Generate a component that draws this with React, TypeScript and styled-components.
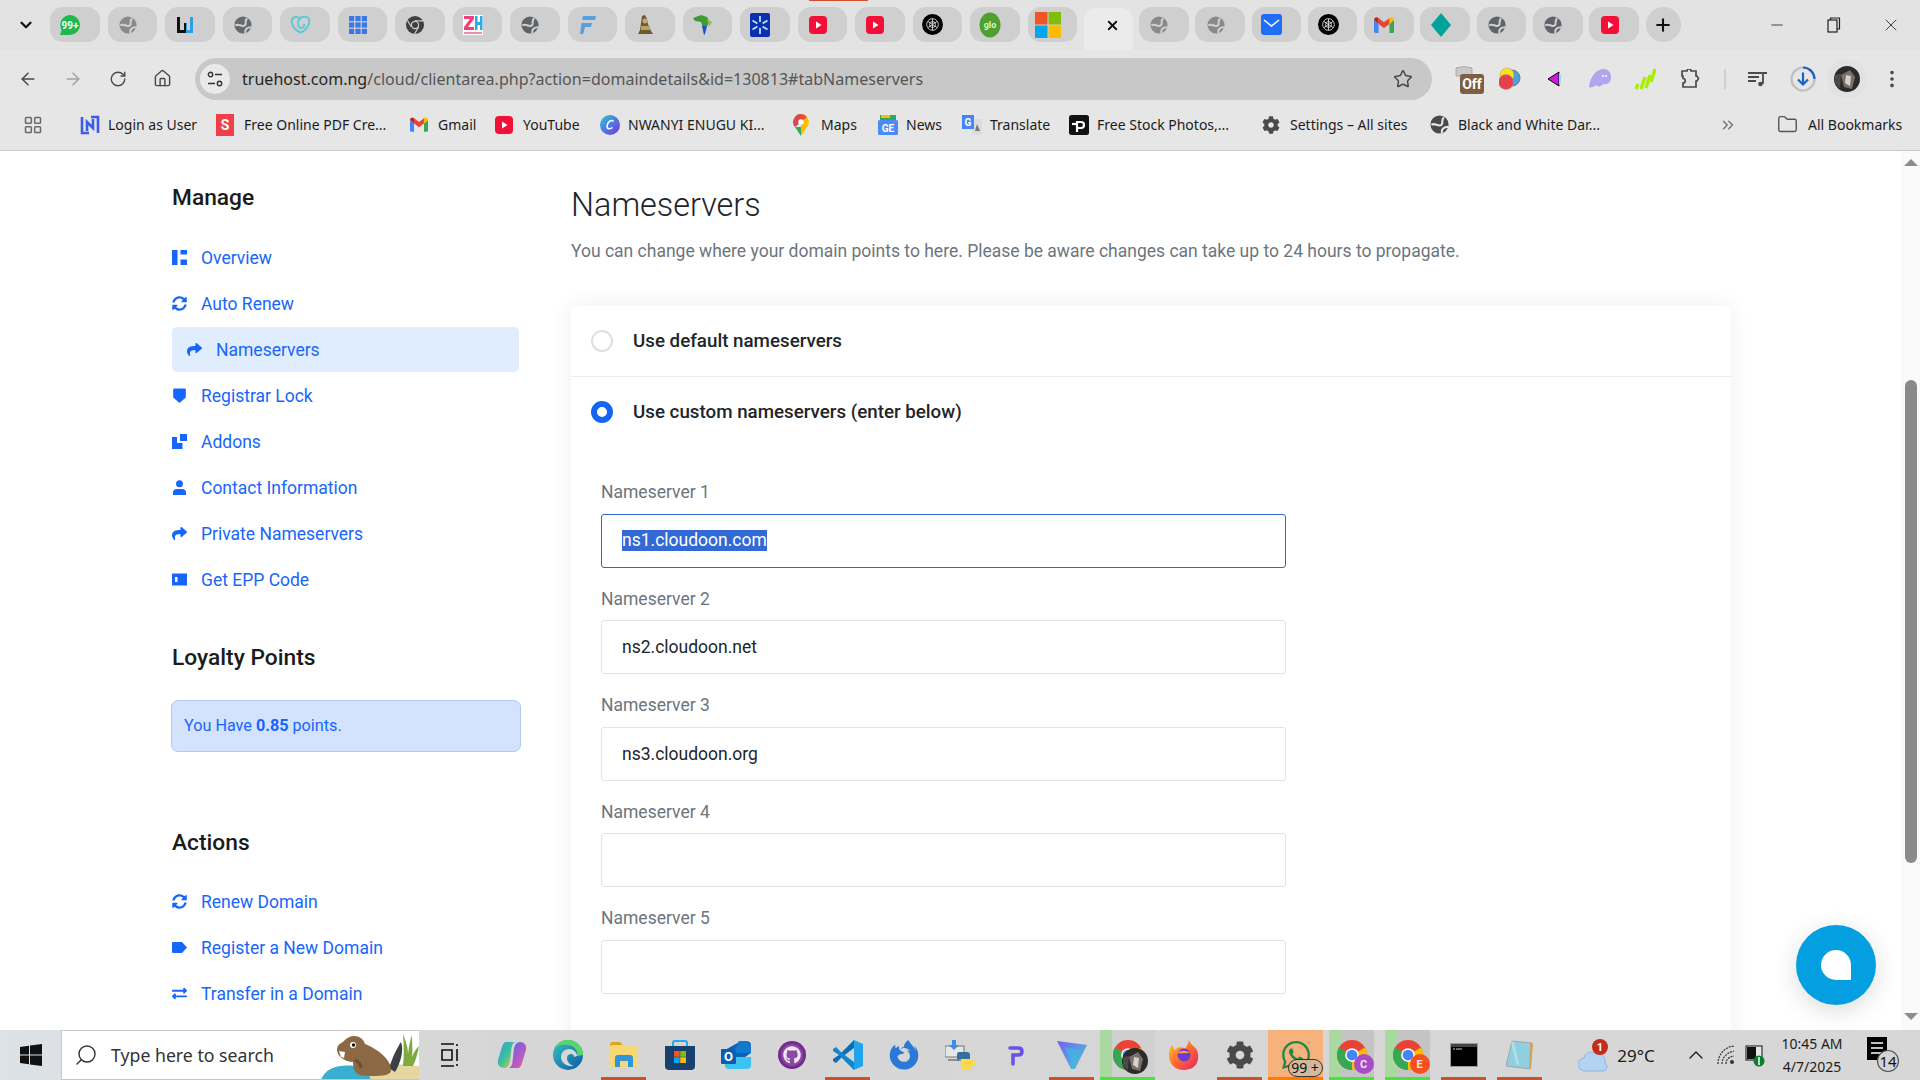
import React from "react";
import styled, { createGlobalStyle } from "styled-components";
import {
  ArrowLeft, ArrowRight, RotateCw, House, Star, EllipsisVertical, LayoutGrid, Folder,
  ChevronsRight, ChevronDown, ChevronUp, Minus, Plus, X, Search,
} from "lucide-react";
import { FaSyncAlt, FaShare, FaExchangeAlt, FaCog, FaWhatsapp, FaGithub, FaFirefoxBrowser } from "react-icons/fa";

const Global = createGlobalStyle`
  html, body { margin: 0; padding: 0; height: 100%; overflow: hidden; background: #fff; }
  #root { height: 100%; }
  * { box-sizing: border-box; }
`;

const UI = `"Noto Sans", "Open Sans", sans-serif`;
const WEB = `Roboto, "Liberation Sans", sans-serif`;
const LINK = "#1766fb";

/* ---------- frame ---------- */
const Screen = styled.div`
  position: relative;
  width: 1920px;
  height: 1080px;
  display: flex;
  flex-direction: column;
  overflow: hidden;
  font-family: ${WEB};
`;

/* ---------- tab strip ---------- */
const TabStrip = styled.div`
  position: relative;
  height: 50px;
  flex: none;
  background: #e3e3e3;
  display: flex;
  padding-left: 12px;
`;
const RecordingMark = styled.div`
  position: absolute;
  left: 809px;
  top: 0;
  width: 59px;
  height: 1px;
  background: #d14f2b;
`;
const TabMenu = styled.div`
  width: 27px;
  height: 35px;
  margin: 7px 11px 0 0;
  display: flex;
  align-items: center;
  justify-content: center;
  color: #111;
`;
const TabGroup = styled.div<{ $gap: number }>`
  display: flex;
  gap: ${(p) => p.$gap}px;
`;
const Tab = styled.div`
  width: 49.5px;
  height: 35px;
  margin-top: 7px;
  border-radius: 13px;
  background: #cfcfcf;
  display: flex;
  align-items: center;
  justify-content: center;
  padding-right: 9px;
`;
const ActiveTab = styled.div`
  width: 49px;
  height: 42px;
  margin: 8px 6px 0 7px;
  border-radius: 12px 12px 0 0;
  background: #ebebeb;
  display: flex;
  align-items: center;
  justify-content: center;
  padding: 0 0 7px 7px;
  color: #111;
`;
const NewTab = styled.div`
  width: 35px;
  height: 35px;
  margin: 7px 0 0 7px;
  border-radius: 50%;
  background: #cfcfcf;
  display: flex;
  align-items: center;
  justify-content: center;
  color: #111;
`;
const WindowControls = styled.div`
  margin-left: auto;
  display: flex;
  color: #333;
`;
const WindowButton = styled.div<{ $w: number }>`
  width: ${(p) => p.$w}px;
  height: 50px;
  display: flex;
  align-items: center;
  justify-content: center;
`;

/* ---------- toolbar ---------- */
const Toolbar = styled.div`
  height: 57px;
  flex: none;
  background: #e6e6e6;
  display: flex;
  align-items: center;
  padding-left: 5px;
`;
const NavButton = styled.div<{ $dim?: boolean }>`
  width: 45px;
  height: 36px;
  display: flex;
  align-items: center;
  justify-content: center;
  color: ${(p) => (p.$dim ? "#a2a2a2" : "#4a4a4a")};
`;
const Omnibox = styled.div`
  width: 1236.5px;
  height: 42px;
  margin: 1px 17.5px 0 10px;
  border-radius: 21px;
  background: #c8c8c8;
  display: flex;
  align-items: center;
  padding: 0 19px 0 5px;
`;
const SiteInfo = styled.div`
  width: 30px;
  height: 30px;
  border-radius: 50%;
  background: #e9e9e9;
  display: flex;
  align-items: center;
  justify-content: center;
  margin-right: 12px;
  flex: none;
`;
const Url = styled.div`
  flex: 1;
  font-family: ${UI};
  font-size: 16px;
  color: #555;
  white-space: nowrap;
  letter-spacing: 0.02px;
`;
const Domain = styled.span`
  color: #242424;
`;
const StarButton = styled.div`
  color: #4a4a4a;
  display: flex;
`;
const Slot = styled.div<{ $w: number }>`
  width: ${(p) => p.$w}px;
  height: 42px;
  flex: none;
  display: flex;
  align-items: center;
  justify-content: center;
  color: #4a4a4a;
`;
const Divider = styled.div`
  width: 2px;
  height: 20px;
  background: #cfcfcf;
`;
const AvatarHalo = styled.div`
  width: 40px;
  height: 40px;
  border-radius: 50%;
  background: #e2e2e2;
  display: flex;
  align-items: center;
  justify-content: center;
`;

/* ---------- bookmarks ---------- */
const Bookmarks = styled.div`
  height: 44px;
  flex: none;
  background: #e6e6e6;
  border-bottom: 1px solid #c9c9c9;
  display: flex;
  align-items: center;
  padding: 0 0 8px 23px;
  font-family: ${UI};
  font-size: 14px;
  color: #1c1c1c;
`;
const AppsIcon = styled.div`
  width: 20px;
  display: flex;
  color: #6a6a6a;
`;
const BarDivider = styled.div<{ $after: number; $before: number }>`
  width: 2px;
  height: 20px;
  background: #d0d0d0;
  margin: 0 ${(p) => p.$after}px 0 ${(p) => p.$before}px;
`;
const Bookmark = styled.div<{ $w: number }>`
  width: ${(p) => p.$w}px;
  flex: none;
  display: flex;
  align-items: center;
  white-space: nowrap;
`;
const BookmarkIcon = styled.span<{ $w?: number }>`
  width: ${(p) => p.$w ?? 28}px;
  flex: none;
  display: flex;
`;
const OverflowIcon = styled.div`
  margin-left: 110px;
  width: 20px;
  color: #777;
  display: flex;
`;

/* ---------- page ---------- */
const Viewport = styled.div`
  flex: 1;
  min-height: 0;
  background: #fff;
  display: flex;
  overflow: hidden;
`;
const Content = styled.div`
  flex: 1;
  display: flex;
  padding-left: 172px;
`;
const Sidebar = styled.aside`
  width: 349px;
  flex: none;
  margin-right: 50px;
  padding-top: 34px;
`;
const SideHeading = styled.h3<{ $top?: number; $bottom: number }>`
  margin: ${(p) => p.$top ?? 0}px 0 ${(p) => p.$bottom}px;
  font-size: 22.75px;
  line-height: 26px;
  font-weight: 500;
  color: #1b1b1b;
`;
const NavItem = styled.div<{ $active?: boolean }>`
  height: 45px;
  margin-bottom: 1px;
  display: flex;
  align-items: center;
  gap: 14px;
  color: ${LINK};
  font-size: 17.5px;
  padding-left: ${(p) => (p.$active ? 15 : 0)}px;
  width: 347px;
  border-radius: 5px;
  background: ${(p) => (p.$active ? "#e0edfe" : "transparent")};
`;
const NavGlyph = styled.span`
  width: 15px;
  height: 15px;
  flex: none;
  display: flex;
`;
const PointsBox = styled.div`
  width: 350px;
  height: 52px;
  margin-left: -1px;
  border: 1px solid #b0c9fb;
  border-radius: 7px;
  background: #d4e2fd;
  color: ${LINK};
  font-size: 16.2px;
  display: flex;
  align-items: center;
  padding: 0 0 1px 12px;
  white-space: pre;
`;
const Main = styled.main`
  width: 1160px;
  flex: none;
  padding-top: 35px;
`;
const Title = styled.h2`
  margin: 0 0 15px;
  font-size: 32.4px;
  line-height: 38px;
  font-weight: 300;
  color: #212529;
`;
const Lead = styled.p`
  margin: 0 0 43px;
  font-size: 17.5px;
  line-height: 24px;
  color: #6c757d;
`;
const Card = styled.section`
  border-radius: 6px;
  background: #fff;
  box-shadow: 0 0 22px rgba(0, 0, 0, 0.07);
  height: 800px;
`;
const OptionRow = styled.div<{ $line?: boolean }>`
  height: ${(p) => (p.$line ? 71 : 70)}px;
  border-bottom: ${(p) => (p.$line ? "1px solid #ebebeb" : "none")};
  display: flex;
  align-items: center;
  padding-left: 20px;
  gap: 20px;
  font-size: 18.75px;
  font-weight: 500;
  color: #212529;
`;
const OptionText = styled.span`
  padding-bottom: 1px;
`;
const Radio = styled.span<{ $on?: boolean }>`
  width: 22px;
  height: 22px;
  flex: none;
  border-radius: 50%;
  background: #fff;
  border: ${(p) => (p.$on ? "6px solid #1266f1" : "2px solid #dfdfe3")};
`;
const Fields = styled.div`
  padding: 34px 0 0 30px;
`;
const Field = styled.div`
  margin-bottom: 20px;
  width: 685px;
`;
const FieldLabel = styled.div`
  height: 22px;
  line-height: 22px;
  margin-bottom: 10.5px;
  font-size: 17.5px;
  color: #6c757d;
`;
const FieldBox = styled.div<{ $focus?: boolean }>`
  height: 54px;
  border: 1px solid ${(p) => (p.$focus ? "#2d66d8" : "#e1e3e6")};
  border-radius: 3px;
  display: flex;
  align-items: center;
  padding-left: 20px;
  font-size: 17.5px;
  color: #212529;
`;
const Selected = styled.span`
  background: #3269d6;
  color: #fff;
  line-height: 21px;
`;

/* ---------- scrollbar & chat ---------- */
const Scrollbar = styled.div`
  width: 19px;
  flex: none;
  background: #fafafa;
  display: flex;
  flex-direction: column;
  align-items: center;
  padding-top: 8px;
`;
const ArrowUp = styled.div`
  width: 0;
  height: 0;
  border-left: 7px solid transparent;
  border-right: 7px solid transparent;
  border-bottom: 7px solid #8c8c8c;
`;
const ArrowDown = styled.div`
  width: 0;
  height: 0;
  border-left: 7px solid transparent;
  border-right: 7px solid transparent;
  border-top: 7px solid #8c8c8c;
`;
const Thumb = styled.div`
  width: 12px;
  height: 483px;
  margin: 214px 0 150px;
  border-radius: 6px;
  background: #8a8a8a;
`;
const ChatButton = styled.div`
  position: absolute;
  left: 1796px;
  top: 925px;
  width: 80px;
  height: 80px;
  border-radius: 50%;
  background: #039fe0;
  box-shadow: 0 6px 24px rgba(0, 0, 0, 0.14);
  display: flex;
  align-items: center;
  justify-content: center;
`;
const ChatGlyph = styled.div`
  width: 30px;
  height: 30px;
  background: #fff;
  border-radius: 15px 15px 0 15px;
`;

/* ---------- taskbar ---------- */
const Taskbar = styled.footer`
  height: 50px;
  flex: none;
  display: flex;
  background: linear-gradient(90deg, #dde2e6 0, #d6d6d6 500px, #d7d7d7 100%);
`;
const StartButton = styled.div`
  width: 61px;
  display: flex;
  align-items: center;
  justify-content: center;
`;
const SearchBox = styled.div`
  position: relative;
  width: 358px;
  background: #fff;
  border: 1px solid #c6c6c6;
  border-right: none;
  display: flex;
  align-items: center;
  padding-left: 12px;
  gap: 13px;
  font-family: ${UI};
  font-size: 17.7px;
  color: #333;
  overflow: hidden;
`;
const SearchGlyph = styled.span`
  display: flex;
  transform: scaleX(-1);
`;
const BeaverArt = styled.div`
  margin-left: auto;
  width: 98px;
  height: 50px;
  flex: none;
  display: flex;
`;
const TaskItem = styled.div<{ $w?: number; $mr?: number; $bar?: string; $bg?: string; $lit?: string }>`
  width: ${(p) => p.$w ?? 45}px;
  margin-right: ${(p) => p.$mr ?? 11}px;
  flex: none;
  display: flex;
  align-items: center;
  justify-content: center;
  background: ${(p) => (p.$lit ? `linear-gradient(90deg, ${p.$lit} 12px, ${p.$bg} 12px)` : p.$bg ?? "transparent")};
  border-bottom: 3px solid ${(p) => p.$bar ?? "transparent"};
  padding-top: 3px;
`;
const TaskViewSlot = styled.div`
  width: 45px;
  margin: 0 16px 0 9px;
  flex: none;
  display: flex;
  align-items: center;
  justify-content: center;
`;
const Tray = styled.div`
  display: flex;
  align-items: center;
  font-family: ${UI};
  color: #1c1c1c;
`;
const TrayIcon = styled.div<{ $w: number; $ml?: number }>`
  width: ${(p) => p.$w}px;
  margin-left: ${(p) => p.$ml ?? 0}px;
  display: flex;
  justify-content: center;
  font-size: 17px;
  white-space: nowrap;
`;
const Clock = styled.div`
  width: 66px;
  margin-left: 12px;
  text-align: center;
  font-size: 14px;
  line-height: 23px;
`;

/* ---------- favicon drawings ---------- */
const Globe = ({ c = "#5f6368", s = 18, h = "#cfcfcf" }: { c?: string; s?: number; h?: string }) => (
  <svg width={s} height={s} viewBox="0 0 20 20" fill="none">
    <circle cx="10" cy="10" r="9.500" fill={c} />
    <path d="M1.500 10.500C5 7.500 8.500 13 12 10.500 14.500 8.500 11 6.500 14.500 2.500M12.500 19c-.8-4 2-6.500 6.500-6.500" stroke={h} strokeWidth="2.300" />
  </svg>
);
const WhatsBadge = () => (
  <svg width="22" height="22" viewBox="0 0 22 22">
    <path d="M11 1a10 10 0 0 1 0 20H1l1.600-5A10 10 0 0 1 11 1z" fill="#1fb84e" />
    <text x="11" y="14.500" fontSize="10" fontWeight="700" textAnchor="middle" fill="#fff" fontFamily="Roboto, sans-serif">99+</text>
  </svg>
);
const WLogo = () => (
  <svg width="18" height="18" viewBox="0 0 18 18">
    <path d="M1 1h3v13h4V7h2v10H1z" fill="#111" />
    <path d="M10 7h1v7h3V1h3v16h-7z" fill="#2d9fe3" />
  </svg>
);
const TealMark = () => (
  <svg width="21" height="19" viewBox="0 0 21 19" fill="none" stroke="#5dcad3" strokeWidth="2">
    <path d="M10.500 17.500C4 15 1 9.500 2 5c.8-3.500 5-4 7.500-1.500C12 1 17.500 .7 19 4.500c1.300 4-2.500 11-8.500 13z" />
    <path d="M9.500 3.500C7.500 7 7.500 11 10 13c3 .5 4.500-1.500 4-4" />
  </svg>
);
const BlueGrid = () => (
  <svg width="18" height="18" viewBox="0 0 18 18" fill="#3b78e7">
    {[0, 6.4, 12.8].flatMap((y) => [0, 6.4, 12.8].map((x) => <rect key={`${x}-${y}`} x={x} y={y} width="5.200" height="5.200" />))}
  </svg>
);
const ChromeMono = () => (
  <svg width="18" height="18" viewBox="0 0 18 18">
    <circle cx="9" cy="9" r="9" fill="#3f3f3f" />
    <circle cx="9" cy="9" r="4.200" fill="#cfcfcf" />
    <circle cx="9" cy="9" r="3" fill="#3f3f3f" />
    <path d="M9 4.800h8M5.400 11 1.500 4.500M12.600 11 8.500 18" stroke="#cfcfcf" strokeWidth="1.200" />
  </svg>
);
const ZkLogo = () => (
  <svg width="20" height="20" viewBox="0 0 20 20">
    <rect width="20" height="20" fill="#fff" />
    <path d="M1 1h10v3L5 12h6v3H1v-3l6-8H1z" fill="#f0417e" />
    <path d="M12 1h2.500v6H17V1h2.500v14H17V10h-2.500v5H12z" fill="#2fa9e0" />
    <rect x="1" y="17" width="18" height="2" fill="#e98bb0" />
  </svg>
);
const FLogo = () => (
  <svg width="16" height="18" viewBox="0 0 16 18">
    <path d="M3 0h13l-1 4H2zM1.500 7H12l-1 4H5l-1.800 7H0z" fill="#54a0e2" />
  </svg>
);
const Figure = () => (
  <svg width="18" height="20" viewBox="0 0 18 20">
    <path d="M6 1l3-1 2 4 1 5 3 7 2 3H2l2-4z" fill="#6d5a2f" />
    <rect x="5" y="11" width="9" height="4" fill="#b9a25b" />
    <circle cx="9" cy="6" r="2.500" fill="#c8a877" />
  </svg>
);
const MapLogo = () => (
  <svg width="20" height="20" viewBox="0 0 20 20">
    <path d="M0 3l8-3 6 2 3 5-3 4-2 3-2-1-2-6-6-1z" fill="#3f9b34" />
    <path d="M9 11l5 0-2 8-1 1z" fill="#1d4fd0" />
    <path d="M14 4l5 3-3 5z" fill="#8bc34a" />
  </svg>
);
const StarLogo = () => (
  <svg width="20" height="24" viewBox="0 0 20 24">
    <rect width="20" height="24" rx="2" fill="#0b2fb0" />
    <path d="M10 3v18M2.500 7.500l15 9M17.500 7.500l-15 9" stroke="#bfe9ff" strokeWidth="1.700" />
    <circle cx="10" cy="12" r="3" fill="#0b2fb0" />
  </svg>
);
const YtLogo = ({ s = 18 }: { s?: number }) => (
  <svg width={s} height={s} viewBox="0 0 18 18">
    <rect width="18" height="18" rx="4" fill="#f40f36" />
    <path d="M7 5.500l5.500 3.500L7 12.500z" fill="#fff" />
  </svg>
);
const OpenAi = ({ s = 21 }: { s?: number }) => (
  <svg width={s} height={s} viewBox="0 0 21 21" fill="none">
    <circle cx="10.500" cy="10.500" r="10.500" fill="#000" />
    <g stroke="#ddd" strokeWidth=".9">
      <circle cx="10.500" cy="10.500" r="5.800" />
      <path d="M6 7.500l9 6M15 7.500l-9 6M10.500 4.700v11.600" />
      <circle cx="10.500" cy="10.500" r="3" />
    </g>
  </svg>
);
const GloLogo = () => (
  <svg width="22" height="26" viewBox="0 0 22 26">
    <ellipse cx="11" cy="13" rx="10.500" ry="12.500" fill="#4fa02e" />
    <text x="11" y="16" fontSize="9" fontWeight="700" textAnchor="middle" fill="#dff0c8" fontFamily="Roboto, sans-serif">glo</text>
  </svg>
);
const MsLogo = ({ s = 26 }: { s?: number }) => (
  <svg width={s} height={s} viewBox="0 0 26 26">
    <rect width="12.500" height="12.500" fill="#f35325" />
    <rect x="13.500" width="12.500" height="12.500" fill="#81bc06" />
    <rect y="13.500" width="12.500" height="12.500" fill="#05a6f0" />
    <rect x="13.500" y="13.500" width="12.500" height="12.500" fill="#ffba08" />
  </svg>
);
const MailLogo = () => (
  <svg width="21" height="21" viewBox="0 0 21 21">
    <rect width="21" height="21" rx="3" fill="#1f6ef5" />
    <path d="M3 6l7.500 6L18 6" stroke="#fff" strokeWidth="1.500" fill="none" />
  </svg>
);
const GmailLogo = ({ w = 20, h = 16 }: { w?: number; h?: number }) => (
  <svg width={w} height={h} viewBox="0 0 20 16">
    <path d="M0 3v11.500c0 .8.700 1.500 1.500 1.500H4.500V7z" fill="#4285f4" />
    <path d="M15.500 7v9h3c.8 0 1.500-.7 1.500-1.500V3z" fill="#34a853" />
    <path d="M4.500 7V1L10 5.200 15.500 1v6L10 11z" fill="#ea4335" />
    <path d="M0 3c0-2.500 2.800-3.800 4.500-2v6z" fill="#c5221f" />
    <path d="M20 3c0-2.500-2.800-3.800-4.500-2v6z" fill="#fbbc04" />
  </svg>
);
const Diamond = () => (
  <svg width="20" height="24" viewBox="0 0 20 24">
    <path d="M10 0l10 12-10 12L0 12z" fill="#00a49a" />
  </svg>
);

/* ---------- bookmark favicons ---------- */
const LoginIcon = () => (
  <svg width="20" height="20" viewBox="0 0 20 20" fill="none" stroke="#3b5de7" strokeWidth="2.600">
    <path d="M2 2v16h7M18 18V2h-7M7 16V7l6 6V4" />
  </svg>
);
const PdfIcon = () => (
  <svg width="18" height="22" viewBox="0 0 18 22">
    <rect width="18" height="22" fill="#ee3f4a" />
    <text x="9" y="16" fontSize="14" fontWeight="700" textAnchor="middle" fill="#fff" fontFamily="Roboto, sans-serif">S</text>
  </svg>
);
const CanvaIcon = () => (
  <svg width="20" height="20" viewBox="0 0 20 20">
    <defs>
      <linearGradient id="cv" x1="0" y1="0" x2="1" y2="1">
        <stop offset="0" stopColor="#25c9d6" />
        <stop offset="1" stopColor="#7a2ce8" />
      </linearGradient>
    </defs>
    <circle cx="10" cy="10" r="10" fill="url(#cv)" />
    <path d="M13.500 6.500C11.500 4 7 7 7 11.500c0 2.500 3 3 5.500 1" stroke="#fff" strokeWidth="1.600" fill="none" />
  </svg>
);
const MapsIcon = () => (
  <svg width="16" height="22" viewBox="0 0 16 22">
    <path d="M8 0a8 8 0 0 1 6 13L8 22z" fill="#fbbc04" />
    <path d="M8 0a8 8 0 0 0-6 13l6-5z" fill="#4285f4" />
    <path d="M8 0a8 8 0 0 1 6 3L2 13A8 8 0 0 1 8 0z" fill="#ea4335" opacity=".9" />
    <path d="M2 13l6 9v-9z" fill="#34a853" />
    <circle cx="8" cy="8" r="2.700" fill="#fff" />
  </svg>
);
const NewsIcon = () => (
  <svg width="20" height="20" viewBox="0 0 20 20">
    <rect x="2" y="0" width="16" height="6" fill="#34a853" />
    <rect x="3" y="0" width="9" height="3" fill="#fbbc04" />
    <rect y="5" width="20" height="15" rx="1.500" fill="#4c8bf5" />
    <text x="10" y="16.500" fontSize="10" fontWeight="700" textAnchor="middle" fill="#fff" fontFamily="Roboto, sans-serif">GE</text>
  </svg>
);
const TranslateIcon = () => (
  <svg width="20" height="20" viewBox="0 0 20 20">
    <path d="M8 4h12v16H10z" fill="#dadce0" />
    <rect width="12" height="14" fill="#4285f4" />
    <text x="6" y="11" fontSize="10" fontWeight="700" textAnchor="middle" fill="#fff" fontFamily="Roboto, sans-serif">G</text>
    <path d="M15 9l3 7h-5z" fill="#777" />
  </svg>
);
const PexelsIcon = () => (
  <svg width="20" height="20" viewBox="0 0 20 20">
    <rect width="20" height="20" rx="2.500" fill="#111" />
    <path d="M8 17V7h4a3 3 0 0 1 0 6H8" stroke="#fff" strokeWidth="2.200" fill="none" />
    <path d="M3 9h5" stroke="#fff" strokeWidth="2.200" />
  </svg>
);

/* ---------- extension icons ---------- */
const OffIcon = () => (
  <svg width="30" height="30" viewBox="0 0 30 30">
    <path d="M2 4q8-3 16 0v8H2z" fill="#c8c8c8" stroke="#aaa" strokeWidth="1" />
    <rect x="6" y="10" width="24" height="20" rx="3" fill="#7d5f3f" />
    <text x="18" y="25" fontSize="14" fontWeight="700" textAnchor="middle" fill="#fff" fontFamily="Roboto, sans-serif">Off</text>
  </svg>
);
const Colors = () => (
  <svg width="22" height="24" viewBox="0 0 22 24">
    <circle cx="13" cy="11" r="8" fill="#4aa3df" stroke="#777" />
    <circle cx="8" cy="8" r="7" fill="#f8e21a" stroke="#999" strokeWidth=".5" />
    <circle cx="7" cy="15" r="7.500" fill="#e8404a" stroke="#999" strokeWidth=".5" />
  </svg>
);
const Arrowhead = () => (
  <svg width="16" height="16" viewBox="0 0 16 16">
    <path d="M13 1v14L2 8z" fill="#d21adf" stroke="#000" strokeWidth="1" />
    <path d="M13 2l2 2v8l-2 2z" fill="#7fe8f0" />
  </svg>
);
const Ghost = () => (
  <svg width="22" height="20" viewBox="0 0 22 20">
    <path d="M0 18C1 8 7 0 15 0c4 0 7 3 7 8s-3 8-8 7c-2 3-5 3-7 1-2 2-5 3-7 2z" fill="#b0a6f0" />
    <circle cx="14" cy="7" r="1" fill="#fff" />
    <circle cx="17" cy="7" r="1" fill="#fff" />
  </svg>
);
const GreenBars = () => (
  <svg width="22" height="22" viewBox="0 0 22 22" fill="none" stroke="#a6f000" strokeWidth="3.400">
    <path d="M2 21l2-5M7 21l4-12M12 20l4-13M17 14l4-13" />
  </svg>
);
const PuzzleIcon = () => (
  <svg width="20" height="20" viewBox="0 0 20 20" fill="none" stroke="#4a4a4a" strokeWidth="1.700">
    <path d="M2 2h5a2 2 0 0 1 4 0h5v5h1l1.500 2.500L17 12h-1v6H3v-4a2.200 2.200 0 0 0 0-4.500V7H2z" />
  </svg>
);
const MediaIcon = () => (
  <svg width="20" height="16" viewBox="0 0 20 16" fill="none" stroke="#4a4a4a" strokeWidth="1.800">
    <path d="M0 2h14M0 6h11M0 10h8M15 13V2h4" />
    <circle cx="12.500" cy="13" r="2.300" fill="#4a4a4a" stroke="none" />
  </svg>
);
const DownloadRing = () => (
  <svg width="26" height="26" viewBox="0 0 26 26" fill="none">
    <circle cx="13" cy="13" r="11.500" stroke="#c0c0c0" strokeWidth="2.200" />
    <path d="M13 1.500A11.500 11.500 0 0 1 24.500 13" stroke="#1a62c8" strokeWidth="2.200" />
    <path d="M13 6.500V18M8 13.500l5 5 5-5" stroke="#1a62c8" strokeWidth="2.200" />
  </svg>
);
const Avatar = () => (
  <svg width="26" height="26" viewBox="0 0 26 26">
    <circle cx="13" cy="13" r="13" fill="#2b2b2b" />
    <path d="M7 9l9-5 5 7-3 12-8-2z" fill="#7b6f6c" />
    <path d="M12 9l5 1-1 10-5-3z" fill="#d8d0cf" />
    <path d="M1 9l6-1-1 15-5-6z" fill="#4a4a4a" />
  </svg>
);
const SiteTune = () => (
  <svg width="16" height="16" viewBox="0 0 16 16" fill="none" stroke="#333" strokeWidth="1.400">
    <circle cx="3.500" cy="3.500" r="2.200" />
    <circle cx="12.500" cy="12.500" r="2.200" />
    <path d="M8 3.500h7M1 12.500h7" />
  </svg>
);
const SmallGlobe = () => <Globe c="#4a4a4a" s={19} h="#e6e6e6" />;
const CogIcon = () => <FaCog size={18} color="#4a4a4a" />;

/* ---------- taskbar drawings ---------- */
const WinLogo = () => (
  <svg width="22" height="24" viewBox="0 0 22 24" fill="#111">
    <path d="M0 4l9-1.300V11.500H0zM10 2.500L22 1v10.500H10zM0 12.500h9v8.800L0 20zM10 12.500h12V23l-12-1.600z" />
  </svg>
);
const Beaver = () => (
  <svg width="98" height="50" viewBox="0 0 98 50">
    <path d="M22 40C40 34 70 32 98 36V50H40z" fill="#e6d6a0" />
    <path d="M0 50C4 38 18 34 34 36c10 2 14 8 16 14z" fill="#3aaed0" />
    <path d="M82 36c1-10 1-20 0-32 3 8 5 13 5 20 1-8 2-14 4-19 0 10 1 15 0 22 2-5 4-8 7-11-1 6-3 14-6 20z" fill="#7dab3e" />
    <path d="M68 38c4-12 8-20 12-26 3 8 0 20-6 30z" fill="#3d3f44" />
    <path d="M22 12C30 2 42 6 44 14c10 4 26 14 26 26 0 6-10 6-24 6-10 0-14-4-14-14-8 0-16-6-16-12 0-4 2-6 6-8z" fill="#8d6845" />
    <circle cx="32" cy="15" r="3" fill="#fff" />
    <circle cx="32.500" cy="15" r="1.700" fill="#111" />
    <path d="M18 21l6 1-1 6-3-1z" fill="#fff" />
    <path d="M34 30q5 2 6 8" stroke="#6d4f33" strokeWidth="3" fill="none" />
  </svg>
);
const TaskViewIcon = () => (
  <svg width="20" height="24" viewBox="0 0 20 24" fill="none" stroke="#111" strokeWidth="1.600">
    <path d="M0 1h13M0 23h13M1 7h10v10H1zM16 1v2M16 6v12M16 21v2" />
  </svg>
);
const CopilotIcon = () => (
  <svg width="30" height="30" viewBox="0 0 30 30">
    <defs>
      <linearGradient id="co1" x1="0" y1="0" x2="1" y2="1">
        <stop offset="0" stopColor="#2a9fe8" />
        <stop offset=".5" stopColor="#3ec09a" />
        <stop offset="1" stopColor="#f7c93c" />
      </linearGradient>
      <linearGradient id="co2" x1="0" y1="0" x2="1" y2="1">
        <stop offset="0" stopColor="#3d6fe0" />
        <stop offset=".5" stopColor="#a65ad0" />
        <stop offset="1" stopColor="#f25f8a" />
      </linearGradient>
    </defs>
    <path d="M9 2h9c-2 1-3 3-3.500 6L13 22c-1 4-3 6-6 6-4 0-7-3-6-8L5 7c1-3 2-5 4-5z" fill="url(#co1)" />
    <path d="M21 28h-9c2-1 3-3 3.500-6L17 8c1-4 3-6 6-6 4 0 7 3 6 8L25 23c-1 3-2 5-4 5z" fill="url(#co2)" />
  </svg>
);
const EdgeIcon = () => (
  <svg width="30" height="30" viewBox="0 0 30 30">
    <defs>
      <linearGradient id="ed" x1="0" y1="0" x2="1" y2="1">
        <stop offset="0" stopColor="#36c4c0" />
        <stop offset="1" stopColor="#0c59a4" />
      </linearGradient>
    </defs>
    <circle cx="15" cy="15" r="15" fill="url(#ed)" />
    <path d="M30 15c0-8-6-15-15-15C9 0 4 3 1 8c4-3 9-4 14-3 7 1 10 6 9 11z" fill="#58d66b" />
    <path d="M24 16c0-4-4-7-8-7-5 0-8 4-8 8 0 6 6 10 13 9-4-1-7-4-7-8 0-3 2-4 4-4s3 1 3 3z" fill="#d7d7d7" />
  </svg>
);
const ExplorerIcon = () => (
  <svg width="28" height="26" viewBox="0 0 28 26">
    <path d="M0 3c0-2 1-3 2-3h8l3 3v4H0z" fill="#e0a51e" />
    <rect y="3" width="28" height="22" rx="2" fill="#f8d775" />
    <path d="M5 25V16q0-3 3-3h12q3 0 3 3v9h-5v-6h-8v6z" fill="#2f94d8" />
  </svg>
);
const StoreIcon = () => (
  <svg width="30" height="30" viewBox="0 0 30 30">
    <path d="M8 6V3q0-2 2-2h10q2 0 2 2v3" stroke="#27a9f0" strokeWidth="2" fill="none" />
    <path d="M0 6h30v20q0 4-4 4H4q-4 0-4-4z" fill="#17406f" />
    <g transform="translate(9 11)"><MsLogo s={12} /></g>
  </svg>
);
const OutlookIcon = () => (
  <svg width="30" height="28" viewBox="0 0 30 28">
    <path d="M4 9L20 0h4q6 0 6 4v8L12 24z" fill="#0a62b8" />
    <path d="M4 16h26v8q0 4-4 4H8q-4 0-4-4z" fill="#3dc3ef" />
    <path d="M18 0h6L30 4v8H12z" fill="#1379cf" />
    <rect y="8" width="15" height="15" rx="1" fill="#0a5cb4" />
    <text x="7.500" y="20" fontSize="13" fontWeight="700" textAnchor="middle" fill="#fff" fontFamily="Roboto, sans-serif">O</text>
  </svg>
);
const GithubRound = () => (
  <svg width="28" height="28" viewBox="0 0 28 28">
    <circle cx="14" cy="14" r="14" fill="#762a8e" />
    <circle cx="14" cy="14" r="11" fill="#8a4aa0" />
    <g transform="translate(5 5)"><FaGithub size={18} color="#efe6f2" /></g>
  </svg>
);
const VsCodeIcon = () => (
  <svg width="30" height="30" viewBox="0 0 30 30">
    <path d="M21 0l9 4v22l-9 4z" fill="#23a3ea" />
    <path d="M21 0v8L9 17 3 23l-3-2v-2l6-4L21 0z" fill="#0a6fb5" />
    <path d="M21 30v-8L9 13 3 7 0 9v2l6 4 15 15z" fill="#0f86cf" />
  </svg>
);
const PythonTool = () => (
  <svg width="30" height="30" viewBox="0 0 30 30">
    <rect x="0" y="6" width="19" height="11" fill="#e6e6e6" stroke="#777" />
    <path d="M7 0h4v5h3l-5 5-5-5h3z" fill="#3a8de0" />
    <path d="M3 20h13" stroke="#777" strokeWidth="1.500" />
    <path d="M14 12h8q3 0 3 3v4H14v2q-2 0-2-3v-3q0-3 2-3z" fill="#366f9e" />
    <path d="M16 20h12q2 0 2 3t-2 3h-2v2q0 2-4 2-6 0-6-3v-3q0-3 0-4z" fill="#fbd848" />
  </svg>
);
const PLetter = () => (
  <svg width="16" height="21" viewBox="0 0 16 21" fill="none" stroke="#6a4fe8" strokeWidth="3.500" strokeLinecap="round">
    <path d="M2 3h8q4 0 4 3.500T10 10H5v9" />
  </svg>
);
const Prism = () => (
  <svg width="30" height="28" viewBox="0 0 30 28">
    <defs>
      <linearGradient id="pr" x1="0" y1="0" x2="1" y2="1">
        <stop offset="0" stopColor="#7a5cf0" />
        <stop offset="1" stopColor="#3fd4d8" />
      </linearGradient>
    </defs>
    <path d="M0 0l30 4-12 24h-4z" fill="url(#pr)" />
    <path d="M7 6l17 3-8 13z" fill="#3fb7e6" opacity=".7" />
  </svg>
);
const ChromeColor = ({ s = 30 }: { s?: number }) => (
  <svg width={s} height={s} viewBox="0 0 24 24">
    <circle cx="12" cy="12" r="12" fill="#ea4335" />
    <path d="M12 12L1.600 6A12 12 0 0 0 12 24z" fill="#34a853" />
    <path d="M12 12l0 12A12 12 0 0 0 22.400 6z" fill="#fbbc04" />
    <circle cx="12" cy="12" r="5.500" fill="#fff" />
    <circle cx="12" cy="12" r="4.300" fill="#4285f4" />
  </svg>
);
const ChromeStack = styled.div`
  position: relative;
  display: flex;
`;
const ChromeBadge = styled.span<{ $c: string }>`
  position: absolute;
  right: -7px;
  bottom: -4px;
  width: 20px;
  height: 20px;
  border-radius: 50%;
  background: ${(p) => p.$c};
  color: #e6e6e6;
  font-size: 11px;
  font-weight: 700;
  display: flex;
  align-items: center;
  justify-content: center;
  font-family: ${WEB};
`;
const PhotoBadge = styled.span`
  position: absolute;
  right: -5px;
  bottom: -4px;
  display: flex;
`;
const FireOrange = () => (
  <svg width="30" height="30" viewBox="0 0 30 30">
    <defs>
      <linearGradient id="fx" x1="0" y1="0" x2="1" y2="1">
        <stop offset="0" stopColor="#ffcb2e" />
        <stop offset=".5" stopColor="#ff6a2e" />
        <stop offset="1" stopColor="#e3206f" />
      </linearGradient>
    </defs>
    <path d="M20 0c1 4 5 6 8 10 3 8 1 20-13 20C6 30 0 24 0 15 0 10 2 6 4 5c0 3 1 4 2 5 3-4 8-3 10-1-4 0-6 2-6 3 4 0 8-4 10-12z" fill="url(#fx)" />
    <circle cx="15" cy="15" r="6.500" fill="#6c3ad8" />
    <path d="M8 13c4-3 9-3 13 0-4 0-9 1-13 0z" fill="#ff9a2e" />
  </svg>
);
const WhatsStack = styled.div`
  position: relative;
  display: flex;
`;
const CountPill = styled.span`
  position: absolute;
  left: 8px;
  bottom: -6px;
  width: 35px;
  height: 18px;
  border-radius: 9px;
  border: 1px solid #333;
  background: #d4b79e;
  color: #111;
  font-family: ${UI};
  font-size: 14px;
  line-height: 16px;
  text-align: center;
  white-space: pre;
`;
const TerminalIcon = () => (
  <svg width="28" height="24" viewBox="0 0 28 24">
    <rect x=".5" y=".5" width="27" height="23" fill="#000" stroke="#9a9a9a" />
    <rect x="1" y="1" width="26" height="3" fill="#444" />
    <path d="M3 6h2M6 6h6" stroke="#ccc" strokeWidth="1" />
  </svg>
);
const NotepadIcon = () => (
  <svg width="28" height="30" viewBox="0 0 28 30">
    <path d="M6 1l20 2-2 26L0 26z" fill="#8fd0e0" stroke="#888" strokeWidth=".6" />
    <path d="M24 3l3 1-2 25h-2z" fill="#c9a560" />
    <path d="M6 1l6 24" stroke="#fff" strokeWidth="3" opacity=".3" />
  </svg>
);
const WeatherIcon = () => (
  <svg width="32" height="34" viewBox="0 0 32 34">
    <path d="M7 33a6.500 6.500 0 0 1-1-13c1-6 8-8 12-4 5-1 10 3 9 9a4.500 4.500 0 0 1-1 8z" fill="#b4d2f2" stroke="#8ab6e4" />
    <circle cx="22" cy="9" r="8" fill="#c42b1c" />
    <text x="22" y="13" fontSize="11" fontWeight="700" textAnchor="middle" fill="#fff" fontFamily="Roboto, sans-serif">1</text>
  </svg>
);
const WifiIcon = () => (
  <svg width="18" height="20" viewBox="0 0 18 20" fill="none" stroke="#333" strokeWidth="1.200">
    <path d="M1 19C1 10 7 2 17 1M5 19c0-6 4-11 12-13M9 19c0-4 2-7 8-8" strokeDasharray="2 1" />
    <circle cx="15" cy="17" r="2" fill="#333" stroke="none" />
  </svg>
);
const BatteryIcon = () => (
  <svg width="20" height="24" viewBox="0 0 20 24">
    <rect x="1" y="3" width="16" height="14" fill="#e8e8e8" stroke="#111" />
    <rect x="2" y="4" width="9" height="12" fill="#111" />
    <circle cx="14" cy="18" r="5.500" fill="#0e7d2e" />
    <path d="M14 14v8" stroke="#fff" strokeWidth="1.500" />
  </svg>
);
const NotifyIcon = () => (
  <svg width="32" height="36" viewBox="0 0 32 36">
    <path d="M0 0h20v23H0z" fill="#000" />
    <path d="M4 6h12M4 11h12M4 16h12" stroke="#fff" strokeWidth="1.600" />
    <circle cx="21" cy="24" r="10.500" fill="#d4d4d4" stroke="#555" strokeWidth="1.200" />
    <text x="21" y="29.500" fontSize="15" textAnchor="middle" fill="#111" fontFamily="Noto Sans, sans-serif">14</text>
  </svg>
);

/* ---------- sidebar glyphs ---------- */
const g = { width: 15, height: 15, viewBox: "0 0 15 15", fill: LINK };
const OverviewGlyph = () => (
  <svg {...g}>
    <rect width="5.500" height="15" />
    <rect x="8.500" width="6.500" height="4.500" />
    <rect x="8.500" y="9.500" width="6.500" height="5.500" />
  </svg>
);
const ShieldGlyph = () => (
  <svg {...g}>
    <path d="M1.200 1.500Q1.200.5 2.200.5h10.600q1 0 1 1V9.500L7.500 15 1.200 9.500z" />
  </svg>
);
const AddonsGlyph = () => (
  <svg {...g}>
    <path d="M0 3h5v6h5.500v6H0z" />
    <rect x="8" width="7" height="7" />
  </svg>
);
const UserGlyph = () => (
  <svg {...g}>
    <circle cx="7.500" cy="3.700" r="3.500" />
    <path d="M1 15v-2.500Q1 9 5 9h5q4 0 4 3.500V15z" />
  </svg>
);
const CardGlyph = () => (
  <svg {...g}>
    <path fillRule="evenodd" d="M0 1.500h15v12H0zM3 5v5h2.500V5z" />
  </svg>
);
const TagGlyph = () => (
  <svg {...g}>
    <path d="M1 2h9l5 5.500-5 5.500H1a1 1 0 0 1-1-1V3a1 1 0 0 1 1-1z" />
  </svg>
);
const sync = <FaSyncAlt size={15} color={LINK} />;
const share = <FaShare size={15} color={LINK} />;

const manageLinks: [React.ReactNode, string, boolean?][] = [
  [<OverviewGlyph />, "Overview"],
  [sync, "Auto Renew"],
  [share, "Nameservers", true],
  [<ShieldGlyph />, "Registrar Lock"],
  [<AddonsGlyph />, "Addons"],
  [<UserGlyph />, "Contact Information"],
  [share, "Private Nameservers"],
  [<CardGlyph />, "Get EPP Code"],
];
const actionLinks: [React.ReactNode, string][] = [
  [sync, "Renew Domain"],
  [<TagGlyph />, "Register a New Domain"],
  [<FaExchangeAlt size={15} color={LINK} />, "Transfer in a Domain"],
];

const leftTabs = [
  <WhatsBadge />, <Globe c="#8a8a8a" />, <WLogo />, <Globe c="#666a6e" />, <TealMark />, <BlueGrid />,
  <ChromeMono />, <ZkLogo />, <Globe c="#5f6368" />, <FLogo />, <Figure />, <MapLogo />, <StarLogo />,
  <YtLogo />, <YtLogo />, <OpenAi />, <GloLogo />, <MsLogo />,
];
const rightTabs = [
  <Globe c="#8a8a8a" />, <Globe c="#8a8a8a" />, <MailLogo />, <OpenAi />, <GmailLogo />, <Diamond />,
  <Globe c="#5f6368" />, <Globe c="#5f6368" />, <YtLogo />,
];
const bookmarks: [React.ReactNode, string, number][] = [
  [<LoginIcon />, "Login as User", 136],
  [<PdfIcon />, "Free Online PDF Cre...", 194],
  [<GmailLogo w={18} h={15} />, "Gmail", 85],
  [<YtLogo s={18} />, "YouTube", 105],
  [<CanvaIcon />, "NWANYI ENUGU KI...", 193],
  [<MapsIcon />, "Maps", 85],
  [<NewsIcon />, "News", 84],
  [<TranslateIcon />, "Translate", 107],
  [<PexelsIcon />, "Free Stock Photos,...", 193],
  [<CogIcon />, "Settings – All sites", 168],
  [<SmallGlobe />, "Black and White Dar...", 179],
];
const extensions: [number, React.ReactNode][] = [
  [40, <OffIcon />],
  [42, <Colors />],
  [46, <Arrowhead />],
  [46, <Ghost />],
  [44, <GreenBars />],
  [46, <PuzzleIcon />],
  [23, <Divider />],
  [44, <MediaIcon />],
  [46, <DownloadRing />],
  [42, <AvatarHalo><Avatar /></AvatarHalo>],
  [48, <EllipsisVertical size={22} />],
];
const fields = [
  ["Nameserver 2", "ns2.cloudoon.net"],
  ["Nameserver 3", "ns3.cloudoon.org"],
  ["Nameserver 4", ""],
  ["Nameserver 5", ""],
];

export default function App() {
  return (
    <Screen>
      <Global />
      <TabStrip>
        <RecordingMark />
        <TabMenu><ChevronDown size={18} strokeWidth={3} /></TabMenu>
        <TabGroup $gap={8}>
          {leftTabs.map((icon, i) => <Tab key={i}>{icon}</Tab>)}
        </TabGroup>
        <ActiveTab><X size={15} strokeWidth={3} /></ActiveTab>
        <TabGroup $gap={6.8}>
          {rightTabs.map((icon, i) => <Tab key={i}>{icon}</Tab>)}
        </TabGroup>
        <NewTab><Plus size={20} strokeWidth={2.5} /></NewTab>
        <WindowControls>
          <WindowButton $w={56}><Minus size={18} strokeWidth={1.2} /></WindowButton>
          <WindowButton $w={57}>
            <svg width="14" height="16" viewBox="0 0 14 16" fill="none" stroke="#222" strokeWidth="1.200">
              <rect x="1" y="3" width="9" height="12" />
              <path d="M3.500 3V1h9v11H10" />
            </svg>
          </WindowButton>
          <WindowButton $w={58}><X size={20} strokeWidth={1.1} /></WindowButton>
        </WindowControls>
      </TabStrip>

      <Toolbar>
        <NavButton><ArrowLeft size={20} strokeWidth={1.8} /></NavButton>
        <NavButton $dim><ArrowRight size={20} strokeWidth={1.8} /></NavButton>
        <NavButton><RotateCw size={18} strokeWidth={1.8} /></NavButton>
        <NavButton><House size={19} strokeWidth={1.8} /></NavButton>
        <Omnibox>
          <SiteInfo><SiteTune /></SiteInfo>
          <Url><Domain>truehost.com.ng</Domain>/cloud/clientarea.php?action=domaindetails&amp;id=130813#tabNameservers</Url>
          <StarButton><Star size={20} strokeWidth={1.8} /></StarButton>
        </Omnibox>
        {extensions.map(([w, icon], i) => <Slot key={i} $w={w}>{icon}</Slot>)}
      </Toolbar>

      <Bookmarks>
        <AppsIcon><LayoutGrid size={20} strokeWidth={1.8} /></AppsIcon>
        <BarDivider $before={17} $after={20} />
        {bookmarks.map(([icon, label, w]) => (
          <Bookmark key={label} $w={w}>
            <BookmarkIcon>{icon}</BookmarkIcon>
            {label}
          </Bookmark>
        ))}
        <OverflowIcon><ChevronsRight size={18} /></OverflowIcon>
        <BarDivider $before={13} $after={27} />
        <Bookmark $w={150}>
          <BookmarkIcon $w={31}><Folder size={21} strokeWidth={1.6} color="#555" /></BookmarkIcon>
          All Bookmarks
        </Bookmark>
      </Bookmarks>

      <Viewport>
        <Content>
          <Sidebar>
            <SideHeading $bottom={24}>Manage</SideHeading>
            {manageLinks.map(([icon, label, active]) => (
              <NavItem key={label} $active={active}>
                <NavGlyph>{icon}</NavGlyph>
                {label}
              </NavItem>
            ))}
            <SideHeading $top={43} $bottom={29}>Loyalty Points</SideHeading>
            <PointsBox>You Have <b>0.85</b> points.</PointsBox>
            <SideHeading $top={78} $bottom={23}>Actions</SideHeading>
            {actionLinks.map(([icon, label]) => (
              <NavItem key={label}>
                <NavGlyph>{icon}</NavGlyph>
                {label}
              </NavItem>
            ))}
          </Sidebar>
          <Main>
            <Title>Nameservers</Title>
            <Lead>You can change where your domain points to here. Please be aware changes can take up to 24 hours to propagate.</Lead>
            <Card>
              <OptionRow $line><Radio /><OptionText>Use default nameservers</OptionText></OptionRow>
              <OptionRow><Radio $on /><OptionText>Use custom nameservers (enter below)</OptionText></OptionRow>
              <Fields>
                <Field>
                  <FieldLabel>Nameserver 1</FieldLabel>
                  <FieldBox $focus><Selected>ns1.cloudoon.com</Selected></FieldBox>
                </Field>
                {fields.map(([label, value]) => (
                  <Field key={label}>
                    <FieldLabel>{label}</FieldLabel>
                    <FieldBox>{value}</FieldBox>
                  </Field>
                ))}
              </Fields>
            </Card>
          </Main>
        </Content>
        <Scrollbar>
          <ArrowUp />
          <Thumb />
          <ArrowDown />
        </Scrollbar>
      </Viewport>
      <ChatButton><ChatGlyph /></ChatButton>

      <Taskbar>
        <StartButton><WinLogo /></StartButton>
        <SearchBox>
          <SearchGlyph><Search size={24} strokeWidth={1.4} /></SearchGlyph>
          Type here to search
          <BeaverArt><Beaver /></BeaverArt>
        </SearchBox>
        <TaskViewSlot><TaskViewIcon /></TaskViewSlot>
        <TaskItem><CopilotIcon /></TaskItem>
        <TaskItem><EdgeIcon /></TaskItem>
        <TaskItem $bar="#c9512c"><ExplorerIcon /></TaskItem>
        <TaskItem><StoreIcon /></TaskItem>
        <TaskItem><OutlookIcon /></TaskItem>
        <TaskItem><GithubRound /></TaskItem>
        <TaskItem $bar="#c9512c"><VsCodeIcon /></TaskItem>
        <TaskItem><FaFirefoxBrowser size={30} color="#2a78d8" /></TaskItem>
        <TaskItem><PythonTool /></TaskItem>
        <TaskItem><PLetter /></TaskItem>
        <TaskItem $mr={6} $bar="#c9512c"><Prism /></TaskItem>
        <TaskItem $w={55} $mr={6} $bar="#4fe03f" $bg="#d0d0d0" $lit="#a9d8a0">
          <ChromeStack><ChromeColor /><PhotoBadge><Avatar /></PhotoBadge></ChromeStack>
        </TaskItem>
        <TaskItem><FireOrange /></TaskItem>
        <TaskItem $mr={6} $bar="#c9512c"><FaCog size={28} color="#4a4a4a" /></TaskItem>
        <TaskItem $w={55} $mr={6} $bar="#ff7a00" $bg="#f6b17c">
          <WhatsStack>
            <FaWhatsapp size={32} color="#1d8a4a" />
            <CountPill>99 +</CountPill>
          </WhatsStack>
        </TaskItem>
        <TaskItem $bar="#4fe03f" $bg="#c4c4c4" $lit="#a9d8a0">
          <ChromeStack><ChromeColor /><ChromeBadge $c="#a94bc4">C</ChromeBadge></ChromeStack>
        </TaskItem>
        <TaskItem $bar="#4fe03f" $bg="#c4c4c4" $lit="#a9d8a0">
          <ChromeStack><ChromeColor /><ChromeBadge $c="#f4511e">E</ChromeBadge></ChromeStack>
        </TaskItem>
        <TaskItem $bar="#c9512c"><TerminalIcon /></TaskItem>
        <TaskItem $mr={0} $bar="#c9512c"><NotepadIcon /></TaskItem>
        <Tray>
          <TrayIcon $w={44} $ml={30}><WeatherIcon /></TrayIcon>
          <TrayIcon $w={40}>29°C</TrayIcon>
          <TrayIcon $w={24} $ml={28}><ChevronUp size={24} strokeWidth={1.4} /></TrayIcon>
          <TrayIcon $w={24} $ml={6}><WifiIcon /></TrayIcon>
          <TrayIcon $w={24} $ml={5}><BatteryIcon /></TrayIcon>
          <Clock>10:45 AM<br />4/7/2025</Clock>
          <TrayIcon $w={32} $ml={22}><NotifyIcon /></TrayIcon>
        </Tray>
      </Taskbar>
    </Screen>
  );
}
